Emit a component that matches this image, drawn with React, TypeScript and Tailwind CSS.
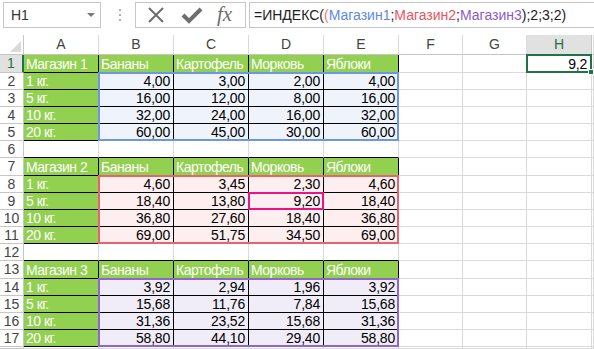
import React from "react";

const COLS = ["A", "B", "C", "D", "E", "F", "G", "H", ""];

type Row = { cells: string[]; kind: "head" | "data" | "empty" };

const rows: Row[] = [
  { kind: "head", cells: ["Магазин 1", "Бананы", "Картофель", "Морковь", "Яблоки"] },
  { kind: "data", cells: ["1 кг.", "4,00", "3,00", "2,00", "4,00"] },
  { kind: "data", cells: ["5 кг.", "16,00", "12,00", "8,00", "16,00"] },
  { kind: "data", cells: ["10 кг.", "32,00", "24,00", "16,00", "32,00"] },
  { kind: "data", cells: ["20 кг.", "60,00", "45,00", "30,00", "60,00"] },
  { kind: "empty", cells: [] },
  { kind: "head", cells: ["Магазин 2", "Бананы", "Картофель", "Морковь", "Яблоки"] },
  { kind: "data", cells: ["1 кг.", "4,60", "3,45", "2,30", "4,60"] },
  { kind: "data", cells: ["5 кг.", "18,40", "13,80", "9,20", "18,40"] },
  { kind: "data", cells: ["10 кг.", "36,80", "27,60", "18,40", "36,80"] },
  { kind: "data", cells: ["20 кг.", "69,00", "51,75", "34,50", "69,00"] },
  { kind: "empty", cells: [] },
  { kind: "head", cells: ["Магазин 3", "Бананы", "Картофель", "Морковь", "Яблоки"] },
  { kind: "data", cells: ["1 кг.", "3,92", "2,94", "1,96", "3,92"] },
  { kind: "data", cells: ["5 кг.", "15,68", "11,76", "7,84", "15,68"] },
  { kind: "data", cells: ["10 кг.", "31,36", "23,52", "15,68", "31,36"] },
  { kind: "data", cells: ["20 кг.", "58,80", "44,10", "29,40", "58,80"] },
  { kind: "empty", cells: [] },
];

function fillFor(rowIdx: number) {
  if (rowIdx <= 5) return "bg-[#eef3fc]";
  if (rowIdx <= 11) return "bg-[#fdeeef]";
  return "bg-[#f1edf8]";
}

const GRID_COLS = "grid-cols-[24px_75px_75px_75px_75px_75px_64px_64px_65px_1fr]";
const GRID_ROWS =
  "grid-rows-[20px_18px_17px_17px_17px_17px_17px_18px_17px_17px_17px_17px_17px_18px_17px_17px_17px_17px_1fr]";

function Toolbar() {
  return (
    <div className="h-[35px] flex items-start pt-[2px] shrink-0">
      <div className="ml-[3px] w-[98px] h-[26px] border border-[#c6c6c6] flex items-center pl-[7px] pr-[5px] text-[14px] text-[#333]">
        <span className="flex-1">H1</span>
        <svg width="8" height="5" viewBox="0 0 8 5">
          <path d="M0 0 H8 L4 4 Z" fill="#777" />
        </svg>
      </div>
      <div className="ml-[18px] mt-[7px] flex flex-col gap-[3px]">
        <div className="w-[2px] h-[2px] bg-[#b0b0b0]" />
        <div className="w-[2px] h-[2px] bg-[#b0b0b0]" />
        <div className="w-[2px] h-[2px] bg-[#b0b0b0]" />
      </div>
      <div className="ml-[14px] w-[111px] h-[26px] border border-[#c6c6c6] flex items-center">
        <svg className="ml-[10px]" width="20" height="20" viewBox="0 0 20 20">
          <path d="M3 3 L17 17 M17 3 L3 17" stroke="#6e6e6e" strokeWidth="2" fill="none" />
        </svg>
        <svg className="ml-[15px]" width="22" height="18" viewBox="0 0 22 18">
          <path d="M2 9 L8 15 L20 3" stroke="#6e6e6e" strokeWidth="4" fill="none" strokeLinejoin="miter" />
        </svg>
        <span className="ml-[14px] font-['Liberation_Serif',serif] italic text-[21px] leading-none text-[#6e6e6e] -mt-[2px]">
          fx
        </span>
      </div>
      <div className="ml-[3px] flex-1 h-[26px] border-y border-l border-[#c6c6c6] flex items-center pl-[4px] text-[14px] text-[#222] whitespace-nowrap">
        <span>=ИНДЕКС(</span>
        <span className="text-[#ef7a62]">(</span>
        <span className="text-[#5f88e2]">Магазин1</span>
        <span>;</span>
        <span className="text-[#e9545f]">Магазин2</span>
        <span>;</span>
        <span className="text-[#8b5cc8]">Магазин3</span>
        <span>);2;3;2)</span>
      </div>
    </div>
  );
}

function ColumnHeaders() {
  return (
    <>
      <div className="border-r border-b border-[#c6c6c6] bg-white flex items-end justify-end pr-[2px] pb-[2px]">
        <svg width="11" height="11" viewBox="0 0 11 11">
          <path d="M11 0 V11 H0 Z" fill="#dadada" />
        </svg>
      </div>
      {COLS.map((c, i) =>
        c === "H" ? (
          <div
            key={i}
            className="bg-[#e1e1e1] border-r border-b border-r-[#c6c6c6] border-b-[#217346] flex items-center justify-center text-[14px] text-[#217346]"
          >
            {c}
          </div>
        ) : (
          <div
            key={i}
            className="bg-white border-r border-b border-r-[#dadada] border-b-[#c6c6c6] flex items-center justify-center text-[14px] text-[#444]"
          >
            {c}
          </div>
        )
      )}
    </>
  );
}

function BodyRow({ row, idx }: { row: Row; idx: number }) {
  const num = idx + 1;
  const nextStartsTable = rows[idx + 1] && rows[idx + 1].kind === "head";
  const cells: React.ReactNode[] = [];
  cells.push(
    num === 1 ? (
      <div
        key="rh"
        className="bg-[#e1e1e1] border-b border-b-[#c6c6c6] border-r-2 border-r-[#217346] flex items-center justify-center text-[14px] text-[#217346]"
      >
        {num}
      </div>
    ) : (
      <div
        key="rh"
        className="bg-white border-r border-b border-[#c6c6c6] flex items-center justify-center text-[14px] text-[#444]"
      >
        {num <= 17 ? num : ""}
      </div>
    )
  );
  for (let c = 0; c < 9; c++) {
    if (c < 5 && row.kind !== "empty") {
      const text = row.cells[c];
      if (row.kind === "head" || c === 0) {
        cells.push(
          <div
            key={c}
            className="bg-[#92d050] border-r border-b border-black flex items-center pl-[2px] pt-[1px] text-[14px] tracking-[-0.5px] text-white whitespace-nowrap overflow-hidden"
          >
            {text}
          </div>
        );
      } else {
        cells.push(
          <div
            key={c}
            className={`${fillFor(idx)} border-r border-b border-black flex items-center justify-end pr-[3px] pt-[1px] text-[14px] tracking-[-0.2px] text-black`}
          >
            {text}
          </div>
        );
      }
    } else if (c < 5 && nextStartsTable) {
      cells.push(<div key={c} className="bg-white border-r border-b border-r-[#dadada] border-b-black" />);
    } else if (num === 1 && c === 7) {
      cells.push(
        <div key={c} className="bg-white border-r border-b border-[#dadada] flex items-center justify-end pr-[4px] pt-[1px] text-[14px] tracking-[-0.2px] text-black">
          9,2
        </div>
      );
    } else {
      cells.push(<div key={c} className="bg-white border-r border-b border-[#dadada]" />);
    }
  }
  return <>{cells}</>;
}

export default function App() {
  return (
    <div className="w-[594px] h-[349px] overflow-hidden bg-white flex flex-col font-['Liberation_Sans',Arial,sans-serif]">
      <Toolbar />
      <div className="relative flex-1">
        <div className={`grid ${GRID_COLS} ${GRID_ROWS} h-full`}>
          <ColumnHeaders />
          {rows.map((r, i) => (
            <BodyRow key={i} row={r} idx={i} />
          ))}
        </div>
        <div className={`absolute inset-0 grid ${GRID_COLS} ${GRID_ROWS} pointer-events-none`}>
          <div className="col-start-3 col-end-7 row-start-3 row-end-7 -ml-px -mt-px border-2 border-[#6d97e6]" />
          <div className="col-start-3 col-end-7 row-start-9 row-end-13 -ml-px -mt-px border-2 border-[#e9636f]" />
          <div className="col-start-3 col-end-7 row-start-15 row-end-19 -ml-px -mt-px border-2 border-[#9166cb]" />
          <div className="col-start-5 col-end-6 row-start-10 row-end-11 -ml-px -mt-px border-2 border-[#ea1582]" />
          <div className="relative col-start-9 col-end-10 row-start-2 row-end-3 -ml-px -mt-px border-2 border-[#217346]">
            <div className="absolute -right-[4px] -bottom-[4px] w-[6px] h-[6px] bg-[#217346] border border-white" />
          </div>
        </div>
      </div>
    </div>
  );
}
